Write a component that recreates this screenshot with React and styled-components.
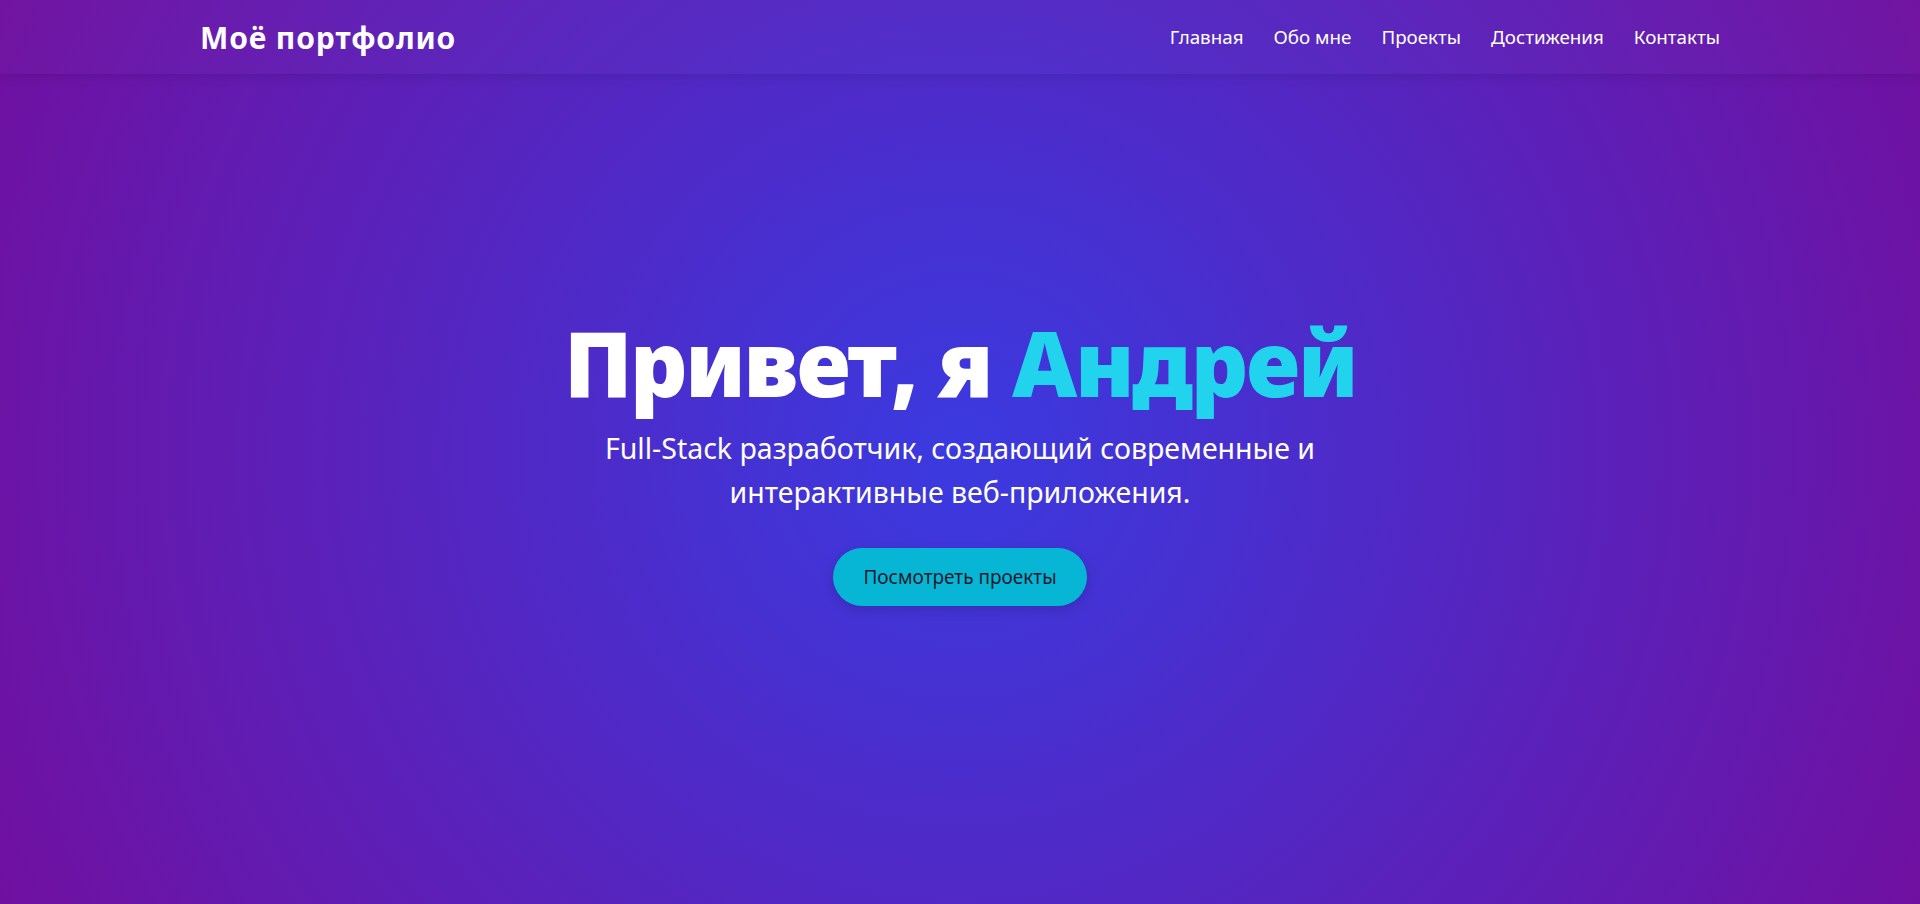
import React from "react";
import styled, { createGlobalStyle } from "styled-components";

const GlobalStyle = createGlobalStyle`
  * {
    box-sizing: border-box;
  }
  body {
    margin: 0;
    font-family: "Noto Sans", "Open Sans", sans-serif;
    color: #fff;
    background: #5a1aa8;
  }
`;

const links = ["Главная", "Обо мне", "Проекты", "Достижения", "Контакты"];

export default function App() {
  return (
    <>
      <GlobalStyle />
      <Page>
        <Header>
          <HeaderInner>
            <Logo>Моё портфолио</Logo>
            <Nav>
              {links.map((l) => (
                <NavLink key={l} href="#">
                  {l}
                </NavLink>
              ))}
            </Nav>
          </HeaderInner>
        </Header>
        <Hero>
          <Title>
            Привет, я <Accent>Андрей</Accent>
          </Title>
          <Subtitle>
            Full-Stack разработчик, создающий современные и интерактивные
            веб-приложения.
          </Subtitle>
          <CtaButton>Посмотреть проекты</CtaButton>
        </Hero>
      </Page>
    </>
  );
}

const Page = styled.div`
  min-height: 100vh;
  display: flex;
  flex-direction: column;
  background: radial-gradient(circle at center, #3a3ae0 0%, #7010a0 100%);
`;

const Header = styled.header`
  height: 74px;
  box-shadow: 0 2px 10px rgba(0, 0, 0, 0.12);
  background: rgba(255, 255, 255, 0.02);
`;

const HeaderInner = styled.div`
  max-width: 1520px;
  height: 100%;
  margin: 0 auto;
  display: flex;
  align-items: center;
  justify-content: space-between;
`;

const Logo = styled.div`
  font-size: 30px;
  font-weight: 700;
  letter-spacing: 0.9px;
`;

const Nav = styled.nav`
  display: flex;
  gap: 30px;
`;

const NavLink = styled.a`
  color: #fff;
  text-decoration: none;
  font-size: 18.8px;
`;

const Hero = styled.section`
  flex: 1;
  display: flex;
  flex-direction: column;
  align-items: center;
  justify-content: center;
  text-align: center;
  padding-bottom: 64px;
`;

const Title = styled.h1`
  margin: 0 0 11px;
  font-size: 90px;
  font-weight: 900;
  line-height: 1.2;
  letter-spacing: -2.4px;
`;

const Accent = styled.span`
  color: #22d3ee;
`;

const Subtitle = styled.p`
  margin: 0 0 33px;
  max-width: 760px;
  font-size: 28.5px;
  line-height: 1.53;
`;

const CtaButton = styled.button`
  padding: 16px 30px;
  border: none;
  border-radius: 30px;
  background: #06b6d4;
  color: #1a1a2e;
  font-family: inherit;
  font-size: 19px;
  cursor: pointer;
  box-shadow: 0 4px 12px rgba(0, 0, 0, 0.15);
`;
